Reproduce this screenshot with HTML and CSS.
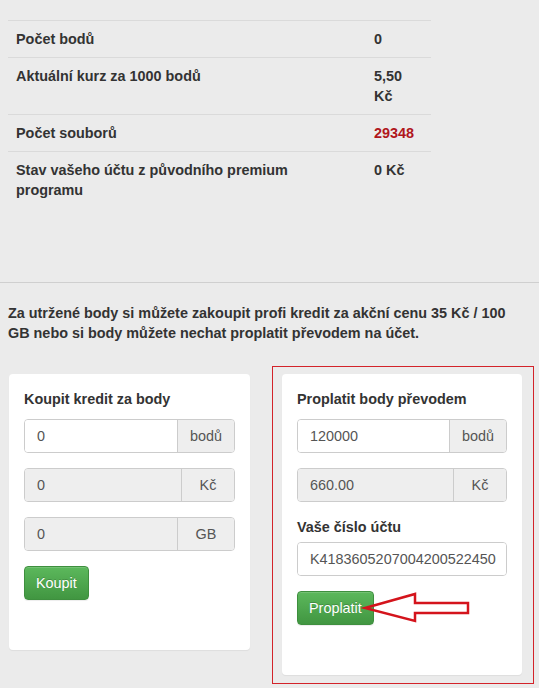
FILE: index.html
```
<!DOCTYPE html>
<html lang="cs">
<head>
<meta charset="utf-8">
<title>Body</title>
<link rel="stylesheet" href="styles.css">
</head>
<body>
<table class="stats">
  <tr><td class="lbl">Počet bodů</td><td class="val">0</td></tr>
  <tr><td class="lbl">Aktuální kurz za 1000 bodů</td><td class="val">5,50 Kč</td></tr>
  <tr><td class="lbl">Počet souborů</td><td class="val red">29348</td></tr>
  <tr><td class="lbl">Stav vašeho účtu z původního premium programu</td><td class="val">0 Kč</td></tr>
</table>
<hr class="sep">
<p class="intro">Za utržené body si můžete zakoupit profi kredit za akční cenu 35 Kč / 100 GB nebo si body můžete nechat proplatit převodem na účet.</p>
<div class="cards">
  <div class="card card-left">
    <div class="card-title">Koupit kredit za body</div>
    <div class="igroup"><div class="ifield">0</div><div class="addon w58">bodů</div></div>
    <div class="igroup"><div class="ifield dis">0</div><div class="addon w54">Kč</div></div>
    <div class="igroup"><div class="ifield dis">0</div><div class="addon w58">GB</div></div>
    <div class="btnrow"><button class="btn">Koupit</button></div>
  </div>
  <div class="redbox">
    <div class="card">
      <div class="card-title">Proplatit body převodem</div>
      <div class="igroup"><div class="ifield">120000</div><div class="addon w58">bodů</div></div>
      <div class="igroup"><div class="ifield dis">660.00</div><div class="addon w54">Kč</div></div>
      <div class="label">Vaše číslo účtu</div>
      <div class="igroup"><div class="ifield single">K4183605207004200522450</div></div>
      <div class="btnrow">
        <button class="btn">Proplatit</button>
        <svg class="arrow" width="120" height="50" viewBox="0 0 120 50">
          <polygon points="8,27 58,13 58,22 111,22 111,32 58,32 58,40" fill="none" stroke="#d4141c" stroke-width="2.5" stroke-linejoin="miter"/>
        </svg>
      </div>
    </div>
  </div>
</div>
</body>
</html>
```
FILE: styles.css
```
html, body {
  margin: 0;
  padding: 0;
  background: #ebebeb;
}
body {
  font-family: "Liberation Sans", Arial, sans-serif;
  font-size: 14.4px;
  line-height: 20px;
  color: #333;
  width: 539px;
  height: 688px;
  overflow: hidden;
}
.stats {
  margin: 20px 0 0 8px;
  width: 423px;
  border-collapse: collapse;
  font-weight: bold;
}
.stats td {
  border-top: 1px solid #dadada;
  padding: 8px;
  vertical-align: top;
  line-height: 20px;
}
.stats .lbl { width: 342px; }
.stats .val { width: 49px; }
.stats .red { color: #b0161c; }
.sep {
  margin: 74px 0 0 0;
  border: 0;
  border-top: 1px solid #cfcfcf;
  height: 0;
}
.intro {
  margin: 20px 0 0 0;
  padding: 0 8px;
  max-width: 512px;
  font-weight: bold;
}
.cards {
  display: flex;
  align-items: flex-start;
  margin-top: 23px;
  padding-left: 9px;
  gap: 22px;
}
.card {
  background: #fff;
  border-radius: 4px;
  box-shadow: 0 1px 1px rgba(0,0,0,0.06);
  padding: 15px 15px 50px 15px;
  box-sizing: border-box;
}
.card-left {
  width: 241px;
  margin-top: 8px;
}
.redbox {
  width: 262px;
  box-sizing: border-box;
  border: 1px solid #d3232a;
  padding: 7px 11px 8px 9px;
}
.redbox .card { width: 240px; }
.card-title {
  font-weight: bold;
  line-height: 20px;
  margin-bottom: 10px;
}
.label {
  font-weight: bold;
  line-height: 20px;
  margin: 1px 0 5px 0;
}
.igroup {
  display: flex;
  height: 34px;
  margin-bottom: 15px;
  border: 1px solid #ccc;
  border-radius: 4px;
  box-sizing: border-box;
  overflow: hidden;
  box-shadow: inset 0 1px 1px rgba(0,0,0,0.05);
}
.ifield {
  flex: 1;
  background: #fff;
  color: #555;
  padding: 6px 12px;
  line-height: 20px;
  font-weight: normal;
}
.ifield.dis { background: #eee; }
.addon {
  background: #eee;
  color: #555;
  border-left: 1px solid #ccc;
  text-align: center;
  line-height: 20px;
  padding: 6px 0;
  box-sizing: border-box;
}
.w58 { width: 57px; }
.w54 { width: 53px; }
.btnrow {
  position: relative;
  height: 34px;
}
.btn {
  font-family: "Liberation Sans", Arial, sans-serif;
  font-size: 14.4px;
  line-height: 20px;
  height: 34px;
  padding: 6px 11px;
  color: #fff;
  border: 1px solid #3e8f3e;
  border-radius: 4px;
  background: linear-gradient(to bottom, #5cb85c 0%, #419641 100%);
  box-shadow: inset 0 1px 0 rgba(255,255,255,0.15), 0 1px 1px rgba(0,0,0,0.075);
  text-shadow: 0 -1px 0 rgba(0,0,0,0.2);
}
.arrow {
  position: absolute;
  left: 60px;
  top: -10px;
}
```
